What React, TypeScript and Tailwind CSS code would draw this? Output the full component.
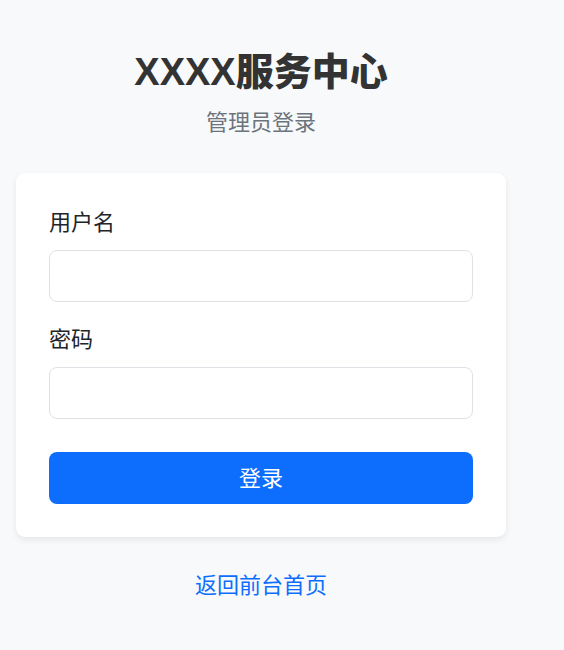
import React, { useState } from 'react';

const font = "font-['Liberation_Sans','Noto_Sans_CJK_SC',sans-serif]";

export default function App() {
  const [username, setUsername] = useState('');
  const [password, setPassword] = useState('');

  return (
    <div className={`min-h-screen bg-[#f8f9fa] ${font}`}>
      <div className="pl-[16px] pt-[50px]">
        <div className="w-[490px]">
          <h1 className="text-center text-[38px] leading-[45.6px] font-black text-[#333333]">XXXX服务中心</h1>
          <p className="mt-[11px] text-center text-[22px] leading-[32.4px] text-[#6c757d]">管理员登录</p>

          <form
            className="mt-[34px] bg-white rounded-[9px] shadow-[0_3px_6px_rgba(0,0,0,0.075)] px-[33px] py-[33px]"
            onSubmit={(e) => e.preventDefault()}
          >
            <div className="mb-[21px]">
              <label className="block mb-[11px] text-[22px] leading-[33px] text-[#212529]">用户名</label>
              <input
                type="text"
                value={username}
                onChange={(e) => setUsername(e.target.value)}
                className="block w-full h-[52px] px-[16px] bg-white border border-[#dee2e6] rounded-[8px] text-[21.6px] outline-none"
              />
            </div>
            <div className="mb-[33px]">
              <label className="block mb-[11px] text-[22px] leading-[33px] text-[#212529]">密码</label>
              <input
                type="password"
                value={password}
                onChange={(e) => setPassword(e.target.value)}
                className="block w-full h-[52px] px-[16px] bg-white border border-[#dee2e6] rounded-[8px] text-[21.6px] outline-none"
              />
            </div>
            <button
              type="submit"
              className="block w-full h-[52px] bg-[#0d6efd] text-white rounded-[8px] text-[22px] leading-[33px]"
            >
              登录
            </button>
          </form>

          <div className="mt-[32px] text-center">
            <a href="#" className="text-[22px] leading-[33px] text-[#0d6efd]">返回前台首页</a>
          </div>
        </div>
      </div>
    </div>
  );
}
